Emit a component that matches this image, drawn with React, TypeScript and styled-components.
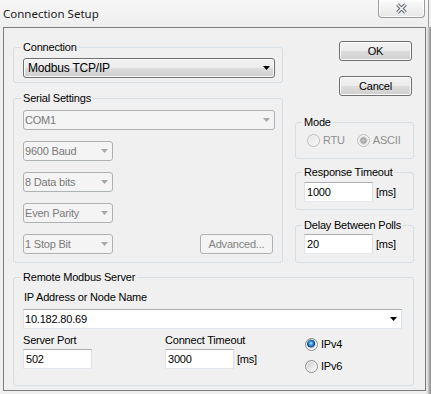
import React from 'react';
import styled, { createGlobalStyle, css } from 'styled-components';

const GlobalStyle = createGlobalStyle`
  html, body { margin: 0; padding: 0; background: #f0f0f0; }
  body { font-family: "Liberation Sans", Arial, sans-serif; font-size: 11px; color: #000; }
  * { box-sizing: border-box; }
`;

const Window = styled.div`
  width: 431px;
  height: 394px;
  background: #f0f0f0;
  display: flex;
  flex-direction: column;
  overflow: hidden;
  font-family: "Liberation Sans", Arial, sans-serif;
  font-size: 11px;
  letter-spacing: -0.2px;
  color: #000;
`;

const TitleBar = styled.div`
  height: 27px;
  flex-shrink: 0;
  display: flex;
  align-items: flex-start;
  margin-right: 2px;
  border-right: 1px solid #9a9a9a;
  background: linear-gradient(#f7f7f7, #eeeeee);
`;

const Title = styled.div`
  padding: 6px 0 0 3px;
  font-family: "Noto Sans", "Open Sans", sans-serif;
  font-size: 11.5px;
  line-height: 16px;
  letter-spacing: 0;
  color: #1b1b1b;
`;

const CloseButton = styled.div`
  margin-left: auto;
  margin-right: 3px;
  width: 47px;
  height: 18px;
  border: 1px solid #9c9c9c;
  border-top: none;
  border-radius: 0 0 4px 4px;
  background: linear-gradient(#fbfbfb, #e7e7e7);
  display: flex;
  align-items: center;
  justify-content: center;
  box-shadow: inset 0 0 0 1px rgba(255, 255, 255, 0.8);
`;

const Body = styled.div`
  display: flex;
  flex: 1;
`;

const Client = styled.div`
  margin-left: 3px;
  width: 423px;
  height: 364px;
  border: 1px solid #7c7c7c;
  background: #f0f0f0;
  padding: 13px 11px 0 9px;
  display: flex;
  flex-direction: column;
`;

const RightFrame = styled.div`
  width: 5px;
  height: 367px;
  background: linear-gradient(to right, #e4e4e4 0%, #e0e0e0 30%, #b8b8b8 55%, #8c8c8c 100%);
`;

const TopSection = styled.div`
  display: flex;
  gap: 12px;
`;

const LeftCol = styled.div`
  width: 270px;
  display: flex;
  flex-direction: column;
`;

const RightCol = styled.div`
  width: 119px;
  display: flex;
  flex-direction: column;
`;

const GroupBox = styled.fieldset<{ $mt?: number; $pt: number; $pb: number; $pl?: number; $pr?: number }>`
  margin: ${(p) => p.$mt ?? 0}px 0 0 0;
  min-width: 0;
  border: 1px solid #d5dfe5;
  border-radius: 3px;
  padding: ${(p) => p.$pt}px ${(p) => p.$pr ?? 7}px ${(p) => p.$pb}px ${(p) => p.$pl ?? 9}px;
`;

const Legend = styled.legend`
  padding: 0 2px;
  margin-left: -2px;
  line-height: 13px;
  font-size: 11px;
  color: #000;
`;

const Stack = styled.div<{ $gap: number }>`
  display: flex;
  flex-direction: column;
  gap: ${(p) => p.$gap}px;
`;

const SpreadRow = styled.div`
  display: flex;
  justify-content: space-between;
  align-items: center;
  padding-right: 2px;
`;

type ComboVariant = 'list' | 'disabled' | 'edit';

const ComboBox = styled.div<{ $w: number; $variant: ComboVariant }>`
  width: ${(p) => p.$w}px;
  height: 20px;
  display: flex;
  align-items: center;
  flex-shrink: 0;
  ${(p) =>
    p.$variant === 'list'
      ? css`
          border: 1px solid #707070;
          border-radius: 3px;
          background: linear-gradient(#f3f3f3 0%, #ebebeb 50%, #dddddd 50%, #cfcfcf 100%);
          box-shadow: inset 0 0 0 1px #fbfbfb;
          font-size: 12px;
          color: #000;
        `
      : p.$variant === 'disabled'
      ? css`
          border: 1px solid #adb2b5;
          border-radius: 3px;
          background: #f4f4f4;
          color: #7a7a7a;
        `
      : css`
          border: 1px solid;
          border-color: #abadb3 #dbdfe6 #e3e9ef #e2e3ea;
          background: #ffffff;
          color: #000;
        `}
`;

const ComboText = styled.span<{ $pad: number }>`
  flex: 1;
  padding-left: ${(p) => p.$pad}px;
  white-space: nowrap;
  overflow: hidden;
`;

const ArrowBox = styled.span`
  width: 16px;
  height: 100%;
  display: flex;
  align-items: center;
  justify-content: center;
`;

const DropArrow = ({ color }: { color: string }) => (
  <svg width="7" height="4" viewBox="0 0 7 4">
    <polygon points="0,0 7,0 3.5,4" fill={color} />
  </svg>
);

const Combo = ({ w, variant, text }: { w: number; variant: ComboVariant; text: string }) => (
  <ComboBox $w={w} $variant={variant}>
    <ComboText $pad={variant === 'list' ? 4 : 1}>{text}</ComboText>
    <ArrowBox>
      <DropArrow color={variant === 'disabled' ? '#a8a8a8' : '#000'} />
    </ArrowBox>
  </ComboBox>
);

const Button = styled.button<{ $disabled?: boolean }>`
  width: 73px;
  height: 20px;
  padding: 0;
  font: inherit;
  font-size: 11px;
  letter-spacing: inherit;
  border-radius: 3px;
  ${(p) =>
    p.$disabled
      ? css`
          border: 1px solid #adb2b5;
          background: #f4f4f4;
          color: #838383;
        `
      : css`
          border: 1px solid #707070;
          background: linear-gradient(#f3f3f3 0%, #ebebeb 50%, #dddddd 50%, #cfcfcf 100%);
          box-shadow: inset 0 0 0 1px #fbfbfb;
          color: #000;
        `}
`;

const ButtonStack = styled.div`
  display: flex;
  flex-direction: column;
  gap: 15px;
  padding-left: 44px;
`;

const TextBox = styled.input<{ $w: number }>`
  width: ${(p) => p.$w}px;
  height: 20px;
  padding: 0 0 0 2px;
  margin: 0;
  font: inherit;
  letter-spacing: inherit;
  color: #000;
  background: #fff;
  border: 1px solid;
  border-color: #abadb3 #dbdfe6 #e3e9ef #e2e3ea;
  outline: none;
`;

const InputRow = styled.div`
  display: flex;
  align-items: center;
  gap: 3px;
`;

const Unit = styled.span`
  color: #000;
`;

const RadioRow = styled.div`
  display: flex;
  align-items: center;
  height: 20px;
  gap: 12px;
  padding-left: 3px;
`;

const RadioItem = styled.label<{ $disabled?: boolean }>`
  display: inline-flex;
  align-items: center;
  gap: 3px;
  height: 20px;
  color: ${(p) => (p.$disabled ? '#8f8f8f' : '#000')};
`;

const RadioDot = styled.span<{ $checked?: boolean; $disabled?: boolean }>`
  width: 13px;
  height: 13px;
  border-radius: 50%;
  flex-shrink: 0;
  border: 1px solid ${(p) => (p.$disabled ? '#bcbcbc' : '#8e8f8f')};
  background: ${(p) => {
    if (p.$disabled && p.$checked)
      return 'radial-gradient(circle, #c9c9c9 0px, #a3a3a3 2.8px, #dcdcdc 3.6px, #f4f4f4 5.5px)';
    if (p.$disabled) return 'linear-gradient(135deg, #e6e6e6, #f7f7f7)';
    if (p.$checked)
      return 'radial-gradient(circle at 45% 40%, #b8ecff 0px, #3a9be0 1.8px, #125ca8 3.3px, #0c3e7c 3.8px, #c9c9c9 4.3px, #f2f2f2 5.5px)';
    return 'linear-gradient(135deg, #c6c6c6 0%, #e8e8e8 55%, #ffffff 100%)';
  }};
  box-shadow: inset 0 0 0 1px ${(p) => (p.$disabled ? '#f4f4f4' : 'rgba(255,255,255,0.6)')};
`;

const RadioColumn = styled.div`
  display: flex;
  flex-direction: column;
  gap: 2px;
`;

const FieldLabel = styled.div`
  line-height: 13px;
  padding-left: 1px;
`;

const BottomGrid = styled.div`
  margin-top: 5px;
  display: grid;
  grid-template-columns: 142px 140px 1fr;
`;

const FieldCol = styled.div`
  display: flex;
  flex-direction: column;
  gap: 2px;
`;

const TimeLabel = styled.div`
  line-height: 13px;
`;

const CloseGlyph = () => (
  <svg width="13" height="11" viewBox="0 0 13 11">
    <path d="M2.5 1.5 L10.5 9.5 M10.5 1.5 L2.5 9.5" stroke="#5d6670" strokeWidth="3.6" fill="none" />
    <path d="M2.5 1.5 L10.5 9.5 M10.5 1.5 L2.5 9.5" stroke="#fdfdfd" strokeWidth="1.5" fill="none" />
  </svg>
);

export default function App() {
  return (
    <>
      <GlobalStyle />
      <Window>
        <TitleBar>
          <Title>Connection Setup</Title>
          <CloseButton>
            <CloseGlyph />
          </CloseButton>
        </TitleBar>
        <Body>
          <Client>
            <TopSection>
              <LeftCol>
                <GroupBox $pt={4} $pb={4}>
                  <Legend>Connection</Legend>
                  <Combo w={252} variant="list" text="Modbus TCP/IP" />
                </GroupBox>
                <GroupBox $mt={9} $pt={5} $pb={8}>
                  <Legend>Serial Settings</Legend>
                  <Stack $gap={11}>
                    <Combo w={252} variant="disabled" text="COM1" />
                    <Combo w={90} variant="disabled" text="9600 Baud" />
                    <Combo w={90} variant="disabled" text="8 Data bits" />
                    <Combo w={90} variant="disabled" text="Even Parity" />
                    <SpreadRow>
                      <Combo w={90} variant="disabled" text="1 Stop Bit" />
                      <Button $disabled>Advanced...</Button>
                    </SpreadRow>
                  </Stack>
                </GroupBox>
              </LeftCol>
              <RightCol>
                <ButtonStack>
                  <Button>OK</Button>
                  <Button>Cancel</Button>
                </ButtonStack>
                <GroupBox $mt={20} $pt={1} $pb={8} $pl={8} $pr={6}>
                  <Legend>Mode</Legend>
                  <RadioRow>
                    <RadioItem $disabled>
                      <RadioDot $disabled />
                      RTU
                    </RadioItem>
                    <RadioItem $disabled>
                      <RadioDot $disabled $checked />
                      ASCII
                    </RadioItem>
                  </RadioRow>
                </GroupBox>
                <GroupBox $mt={7} $pt={3} $pb={7} $pl={8} $pr={6}>
                  <Legend>Response Timeout</Legend>
                  <InputRow>
                    <TextBox $w={69} readOnly value="1000" />
                    <Unit>[ms]</Unit>
                  </InputRow>
                </GroupBox>
                <GroupBox $mt={9} $pt={2} $pb={8} $pl={8} $pr={6}>
                  <Legend>Delay Between Polls</Legend>
                  <InputRow>
                    <TextBox $w={69} readOnly value="20" />
                    <Unit>[ms]</Unit>
                  </InputRow>
                </GroupBox>
              </RightCol>
            </TopSection>
            <GroupBox $mt={8} $pt={7} $pb={9} $pr={11}>
              <Legend>Remote Modbus Server</Legend>
              <FieldLabel>IP Address or Node Name</FieldLabel>
              <Stack $gap={0} style={{ marginTop: 5 }}>
                <Combo w={379} variant="edit" text="10.182.80.69" />
              </Stack>
              <BottomGrid>
                <FieldCol>
                  <TimeLabel>Server Port</TimeLabel>
                  <TextBox $w={69} readOnly value="502" />
                </FieldCol>
                <FieldCol>
                  <TimeLabel>Connect Timeout</TimeLabel>
                  <InputRow>
                    <TextBox $w={69} readOnly value="3000" />
                    <Unit>[ms]</Unit>
                  </InputRow>
                </FieldCol>
                <RadioColumn>
                  <RadioItem>
                    <RadioDot $checked />
                    IPv4
                  </RadioItem>
                  <RadioItem>
                    <RadioDot />
                    IPv6
                  </RadioItem>
                </RadioColumn>
              </BottomGrid>
            </GroupBox>
          </Client>
          <RightFrame />
        </Body>
      </Window>
    </>
  );
}
